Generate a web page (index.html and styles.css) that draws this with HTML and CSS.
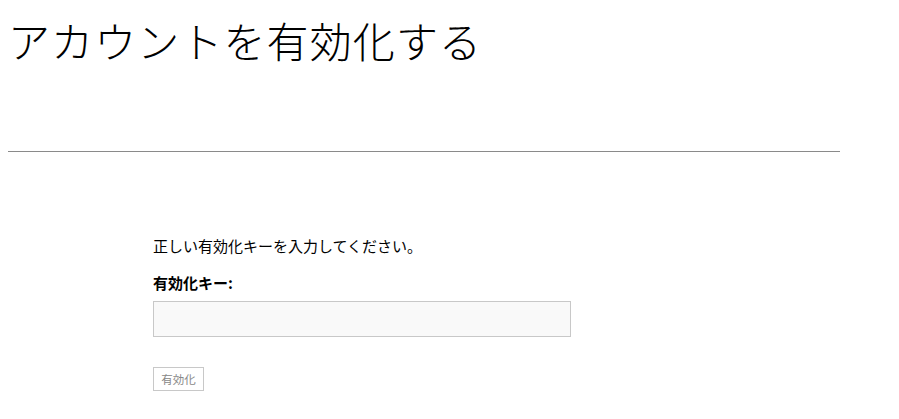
FILE: index.html
```html
<!DOCTYPE html>
<html lang="ja">
<head>
<meta charset="utf-8">
<title>アカウントを有効化する</title>
<link rel="stylesheet" href="styles.css">
</head>
<body>
<div class="page">
  <h1 class="title">アカウントを有効化する</h1>
  <hr class="rule">
  <form class="activate">
    <p class="intro">正しい有効化キーを入力してください。</p>
    <label class="label" for="key">有効化キー:</label>
    <input class="field" id="key" type="text">
    <button class="btn" type="button">有効化</button>
  </form>
</div>
</body>
</html>
```
FILE: styles.css
```css
html, body {
  margin: 0;
  padding: 0;
  background: #fff;
}
body {
  padding: 8px;
  font-family: "Noto Sans CJK JP", "Noto Sans", sans-serif;
  color: #000;
}
.page {
  width: 832px;
}
.title {
  margin: 0;
  padding-top: 2px;
  font-family: "Noto Sans CJK JP", serif;
  font-weight: 300;
  font-size: 42px;
  line-height: 60px;
  letter-spacing: 1.1px;
  color: #000;
}
.rule {
  margin: 81px 0 0;
  border: 0;
  border-top: 1px solid #8a8a8a;
  height: 0;
}
.activate {
  display: flex;
  flex-direction: column;
  align-items: flex-start;
  padding: 83px 0 0 145px;
}
.intro {
  margin: 0;
  font-size: 15px;
  line-height: 22px;
}
.label {
  margin-top: 16px;
  font-weight: 700;
  font-size: 15px;
  line-height: 20px;
}
.field {
  box-sizing: border-box;
  margin-top: 8px;
  width: 418px;
  height: 36px;
  border: 1px solid #c8c8c8;
  background: #f9f9f9;
  padding: 0 8px;
}
.btn {
  box-sizing: border-box;
  margin-top: 30px;
  width: 51px;
  height: 24px;
  padding: 0;
  border: 1px solid #c8c8c8;
  background: #fff;
  color: #888;
  font-family: "Noto Sans CJK JP", sans-serif;
  font-size: 11.5px;
  line-height: 22px;
}
```
